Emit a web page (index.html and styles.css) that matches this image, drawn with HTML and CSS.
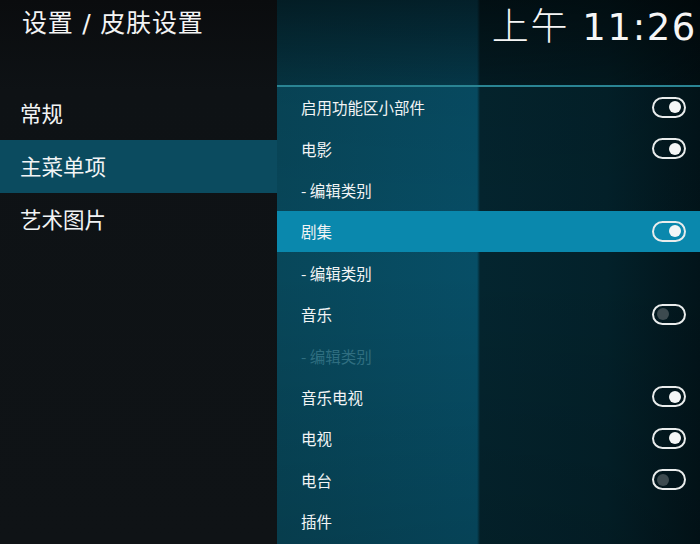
FILE: index.html
```html
<!DOCTYPE html>
<html lang="zh-CN">
<head>
  <meta charset="UTF-8" />
  <title>皮肤设置</title>
  <link rel="stylesheet" href="styles.css">
</head>
<body>
  <div class="screen">
    <aside class="sidebar">
      <header class="crumb">设置 / 皮肤设置</header>
      <ul class="categories">
        <li>常规</li>
        <li class="active">主菜单项</li>
        <li>艺术图片</li>
      </ul>
    </aside>

    <main class="content">
      <header class="topbar">
        <div class="clock"><span class="ampm">上午</span> 11:26</div>
      </header>
      <ul class="options">
        <li class="option"><span>启用功能区小部件</span><i class="toggle on"></i></li>
        <li class="option"><span>电影</span><i class="toggle on"></i></li>
        <li class="option"><span>- 编辑类别</span></li>
        <li class="option focused"><span>剧集</span><i class="toggle on"></i></li>
        <li class="option"><span>- 编辑类别</span></li>
        <li class="option"><span>音乐</span><i class="toggle"></i></li>
        <li class="option disabled"><span>- 编辑类别</span></li>
        <li class="option"><span>音乐电视</span><i class="toggle on"></i></li>
        <li class="option"><span>电视</span><i class="toggle on"></i></li>
        <li class="option"><span>电台</span><i class="toggle"></i></li>
        <li class="option"><span>插件</span></li>
      </ul>
    </main>
  </div>
</body>
</html>
```

FILE: styles.css
```css
html, body {
  margin: 0;
  height: 100%;
  overflow: hidden;
}
body {
  font-family: "Noto Sans CJK SC", "Noto Sans", sans-serif;
  color: #f2f4f5;
  background: #0b0e11;
}
ul {
  list-style: none;
  margin: 0;
  padding: 0;
}

.screen {
  display: grid;
  grid-template-columns: 277px 1fr;
  height: 544px;
}

/* left column: breadcrumb + categories */
.sidebar {
  background: linear-gradient(to bottom, #0a0c0e 0, #0e1215 90px, #0f1316 100%);
}
.crumb {
  height: 87px;
  box-sizing: border-box;
  padding: 4px 0 0 22px;
  font-family: "DejaVu Sans", "Noto Sans CJK SC", sans-serif;
  font-size: 25px;
  letter-spacing: 0.8px;
  line-height: 40px;
  color: #f4f4f4;
}
.categories li {
  height: 53px;
  line-height: 51px;
  padding-left: 20px;
  font-size: 21.5px;
}
.categories li.active {
  background: #0b4b5f;
}

/* right column */
.content {
  display: flex;
  flex-direction: column;
  background:
    linear-gradient(to bottom, rgba(0, 0, 0, 0.1) 0, rgba(0, 0, 0, 0) 50%, rgba(0, 0, 0, 0.15) 100%),
    linear-gradient(to right, #08475a 0, #074e66 200px, #04252f 203px, #03212a 330px, #02141a 100%);
}
.topbar {
  height: 84.5px;
  border-bottom: 2px solid #2a8493;
  display: flex;
  justify-content: flex-end;
  background:
    linear-gradient(to bottom, rgba(0, 0, 0, 0.55) 0, rgba(0, 0, 0, 0.25) 100%);
}
.clock {
  font-family: "DejaVu Sans", "Noto Sans CJK SC", sans-serif;
  font-size: 37px;
  line-height: 56px;
  letter-spacing: 1.6px;
  padding-right: 3px;
  color: #f6f6f6;
  white-space: nowrap;
}
.clock .ampm {
  font-weight: 300;
}

.options {
  flex: 1;
}
.option {
  height: 41.4px;
  display: flex;
  align-items: center;
  justify-content: space-between;
  padding: 0 14px 0 24px;
  font-size: 15.5px;
}
.option.focused {
  background: #0a88ad;
}
.option.disabled {
  color: #2f6e80;
}

/* switch */
.toggle {
  width: 30px;
  height: 17px;
  border: 2px solid #e9ecec;
  border-radius: 11px;
  position: relative;
}
.toggle::after {
  content: "";
  position: absolute;
  top: 2.5px;
  left: 3px;
  width: 12px;
  height: 12px;
  border-radius: 50%;
  background: #3c4a4f;
}
.toggle.on::after {
  left: auto;
  right: 3px;
  background: #f4f6f6;
}
```
